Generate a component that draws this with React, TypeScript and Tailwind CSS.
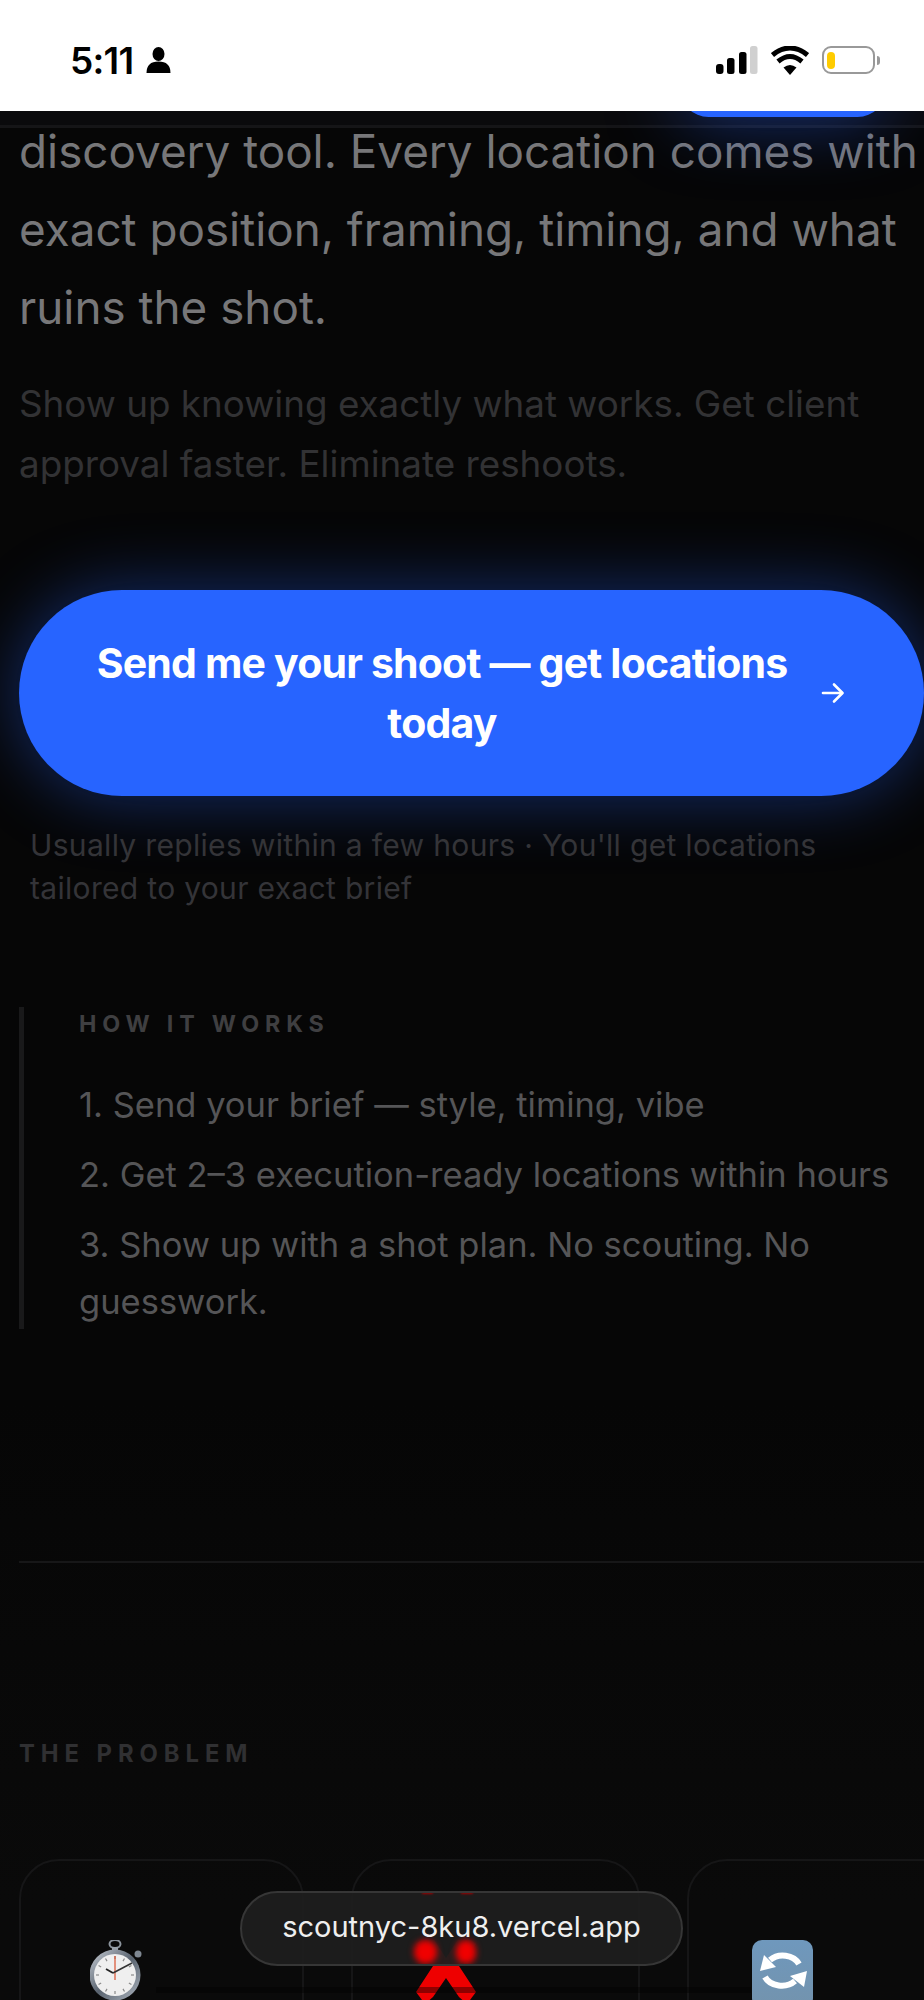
import React from "react";

function Signal() {
  return (
    <svg width="42" height="28" viewBox="0 0 42 28" className="block">
      <rect x="0" y="18" width="7.5" height="10" rx="3" fill="#000" />
      <rect x="11" y="12" width="7.5" height="16" rx="2.5" fill="#000" />
      <rect x="23" y="6" width="7.5" height="22" rx="2.5" fill="#000" />
      <rect x="34" y="0" width="7.5" height="28" rx="2.5" fill="#d0d0d0" />
    </svg>
  );
}

function Wifi() {
  return (
    <svg width="38" height="29" viewBox="0 0 38 29" className="block">
      <path d="M19 29 L12.5 21.5 Q19 16.5 25.5 21.5 Z" fill="#000" />
      <path d="M7 15.5 Q19 5.5 31 15.5" fill="none" stroke="#000" strokeWidth="5" />
      <path d="M1.5 9 Q19 -5 36.5 9" fill="none" stroke="#000" strokeWidth="5" />
    </svg>
  );
}

function Battery() {
  return (
    <div className="flex items-center">
      <div className="w-[53px] h-[28px] rounded-[9px] border-2 border-[#999999] bg-white flex items-center pl-[3px]">
        <div className="w-[8px] h-[17px] rounded-[4px] bg-[#ffcc00]" />
      </div>
      <div className="ml-[2px] w-[3px] h-[9px] rounded-r-[3px] bg-[#999999]" />
    </div>
  );
}

function Person() {
  return (
    <svg width="25" height="26" viewBox="0 0 25 26" className="block">
      <ellipse cx="12.5" cy="7" rx="6" ry="7" fill="#000" />
      <path d="M0.5 26 Q0.5 14.5 12.5 14.5 Q24.5 14.5 24.5 26 Z" fill="#000" />
    </svg>
  );
}

function Stopwatch() {
  const ticks = Array.from({ length: 12 }, (_, i) => i * 30);
  return (
    <svg width="54" height="60" viewBox="0 0 54 60" className="block">
      <defs>
        <linearGradient id="rim" x1="0" y1="0" x2="1" y2="1">
          <stop offset="0" stopColor="#c8ced6" />
          <stop offset="0.5" stopColor="#59636f" />
          <stop offset="1" stopColor="#aeb6c0" />
        </linearGradient>
      </defs>
      <ellipse cx="25" cy="4" rx="5.5" ry="4" fill="none" stroke="#8b939c" strokeWidth="2" />
      <rect x="22" y="7" width="6" height="4" fill="#9aa2ab" />
      <circle cx="48" cy="14" r="3.5" fill="#7f8892" />
      <circle cx="25" cy="35" r="25.5" fill="url(#rim)" />
      <circle cx="25" cy="35" r="21" fill="#efefef" />
      {ticks.map((a) => (
        <line key={a} x1="25" y1="16" x2="25" y2="19" stroke="#8a8a8a" strokeWidth="1.2" transform={`rotate(${a} 25 35)`} />
      ))}
      <line x1="25" y1="16" x2="25" y2="40" stroke="#d9502e" strokeWidth="1.2" />
      <line x1="23" y1="33" x2="42" y2="23" stroke="#333" strokeWidth="1.5" />
      <line x1="23" y1="33" x2="16" y2="29" stroke="#222" strokeWidth="1.8" />
    </svg>
  );
}

function RedCross() {
  return (
    <svg width="62" height="60" viewBox="0 0 62 60" className="block">
      <path d="M31 18 L44 -2 L53 -2 L61 4 L44 26 L61 52 L52 64 L44 57 L31 38 L18 57 L10 64 L1 52 L18 26 L1 4 L9 -2 L18 -2 Z" fill="#ee0000" />
    </svg>
  );
}

function SyncEmoji() {
  return (
    <svg width="61" height="60" viewBox="0 0 61 60" className="block">
      <defs>
        <linearGradient id="tile" x1="0" y1="0" x2="0" y2="1">
          <stop offset="0" stopColor="#6f98bd" />
          <stop offset="1" stopColor="#7393ad" />
        </linearGradient>
      </defs>
      <rect x="0" y="0" width="61" height="68" rx="10" fill="url(#tile)" />
      <path d="M47 24 A18 15 0 0 0 18 20" fill="none" stroke="#fff" strokeWidth="6" />
      <path d="M8 31 L12 15 L24 27 Z" fill="#fff" />
      <path d="M13 37 A18 14 0 0 0 43 41" fill="none" stroke="#fff" strokeWidth="6" />
      <path d="M55 31 L52 47 L38 36 Z" fill="#fff" />
    </svg>
  );
}

export default function App() {
  return (
    <div className="relative w-[924px] h-[2000px] overflow-hidden bg-[linear-gradient(to_bottom,#060606_0%,#060606_70%,#0a0a0a_95%)] font-['Inter',sans-serif]">
      <header className="relative z-20 h-[111px] bg-white flex items-center justify-between pt-[9px] pl-[70px] pr-[44px]">
        <div className="flex items-center gap-[13px]">
          <span className="text-[37px] leading-none font-semibold text-black tracking-[-0.02em]">5:11</span>
          <Person />
        </div>
        <div className="flex items-center gap-[13px]">
          <Signal />
          <Wifi />
          <Battery />
        </div>
      </header>

      {/* Sticky nav seen behind the status bar */}
      <div className="absolute z-10 top-[111px] left-0 w-full h-[17px] bg-[#0a0a0c] border-b-[3px] border-[#151517]" />
      <div className="absolute z-10 top-[60px] left-[680px] w-[206px] h-[57px] rounded-[50px] bg-[#2764ff] shadow-[0_0_70px_rgba(39,100,255,0.5)]" />

      <main className="relative pl-[19px]">
        <p className="mt-[2px] w-[905px] text-[45.8px] leading-[78px] text-[#777779]">
          discovery tool. Every location comes with exact position, framing, timing, and what ruins the shot.
        </p>
        <p className="mt-[27px] w-[880px] text-[36.8px] leading-[60px] text-[#323234]">
          Show up knowing exactly what works. Get client approval faster. Eliminate reshoots.
        </p>

        <button className="mt-[96px] w-[905px] h-[206px] rounded-[103px] bg-[#2764ff] shadow-[0_0_70px_rgba(39,100,255,0.42)] flex items-center pl-[61px] text-white">
          <span className="w-[724px] text-center text-[41px] leading-[60px] font-bold tracking-[-0.02em]">
            Send me your shoot — get locations today
          </span>
          <svg width="24" height="24" viewBox="0 0 24 24" className="ml-[17px] block" fill="none" stroke="#fff" strokeWidth="2.6" strokeLinecap="round" strokeLinejoin="round">
            <path d="M2 12 H21" />
            <path d="M13 3.5 L21.5 12 L13 20.5" />
          </svg>
        </button>

        <p className="mt-[28px] ml-[11px] w-[830px] text-[30.05px] leading-[43px] tracking-[0.01em] text-[#343438]">
          Usually replies within a few hours · You'll get locations tailored to your exact brief
        </p>

        <section className="mt-[97px] h-[322px] border-l-[5px] border-[#19191a] pl-[55px]">
          <div className="pt-[2px] text-[23.3px] leading-[30px] font-bold tracking-[0.25em] text-[#3f3f41]">HOW IT WORKS</div>
          <ol className="mt-[37px] flex flex-col gap-[13px] text-[34.5px] leading-[57px] text-[#555557]">
            <li>1. Send your brief — style, timing, vibe</li>
            <li>2. Get 2–3 execution-ready locations within hours</li>
            <li>3. Show up with a shot plan. No scouting. No guesswork.</li>
          </ol>
        </section>

        <div className="mt-[232px] h-[2px] bg-[#171718]" />

        <h2 className="mt-[176px] text-[23.8px] leading-[30px] font-bold tracking-[0.25em] text-[#303032]">THE PROBLEM</h2>

        <div className="mt-[90px] flex gap-[47px] w-[1100px]">
          <div className="w-[285px] h-[300px] shrink-0 rounded-[40px] border-2 border-[#161617] pl-[69px] pt-[79px]">
            <Stopwatch />
          </div>
          <div className="w-[289px] h-[300px] shrink-0 rounded-[40px] border-2 border-[#161617] pl-[62px] pt-[79px]">
            <RedCross />
          </div>
          <div className="w-[400px] h-[300px] shrink-0 rounded-[40px] border-2 border-[#161617] pl-[63px] pt-[79px]">
            <SyncEmoji />
          </div>
        </div>
      </main>

      {/* Browser chrome overlays */}
      <div className="absolute z-20 left-[156px] top-[1987px] w-[595px] h-[6px] bg-black/40" />
      <div className="absolute z-30 left-[240px] top-[1891px] w-[443px] h-[75px] rounded-[38px] border-2 border-[#363636] bg-[#1e1e1e]/95 overflow-hidden flex items-center justify-center pb-[4px]">
        <span className="absolute left-[172px] top-[47px] w-[23px] h-[24px] rounded-full bg-[#f00000] blur-[3px]" />
        <span className="absolute left-[214px] top-[47px] w-[20px] h-[24px] rounded-full bg-[#f00000] blur-[3px]" />
        <span className="absolute left-[180px] top-[-2px] w-[11px] h-[3px] bg-[#a00000] blur-[1px]" />
        <span className="absolute left-[219px] top-[-2px] w-[12px] h-[3px] bg-[#a00000] blur-[1px]" />
        <span className="relative text-[29px] leading-none text-[#efefef]">scoutnyc-8ku8.vercel.app</span>
      </div>
    </div>
  );
}
